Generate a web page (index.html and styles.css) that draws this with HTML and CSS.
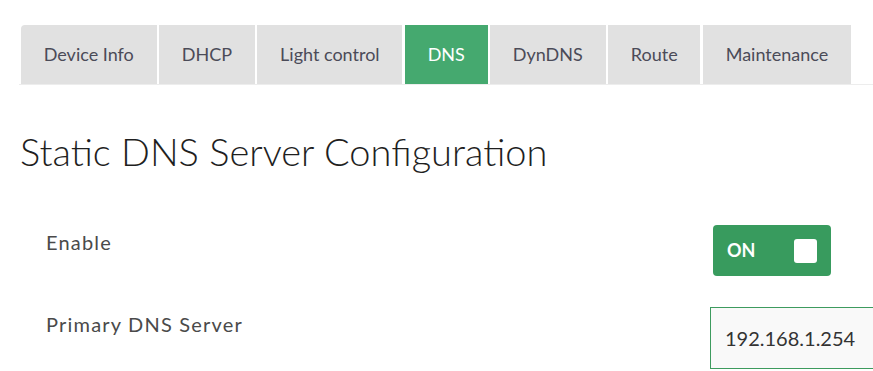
FILE: index.html
```html
<!DOCTYPE html>
<html lang="en">
<head>
    <meta charset="UTF-8">
    <meta name="viewport" content="width=device-width, initial-scale=1.0">
    <title>DNS Settings</title>
    <link rel="stylesheet" href="styles.css">
</head>
<body>
    <div class="page">
        <ul class="tabs">
            <li class="tab tab-first">Device Info</li>
            <li class="tab">DHCP</li>
            <li class="tab">Light control</li>
            <li class="tab active">DNS</li>
            <li class="tab">DynDNS</li>
            <li class="tab">Route</li>
            <li class="tab">Maintenance</li>
        </ul>

        <h1 class="title">Static DNS Server Configuration</h1>

        <div class="form">
            <div class="row">
                <div class="label">Enable</div>
                <div class="control">
                    <div class="toggle">
                        <span class="toggle-text">ON</span>
                        <span class="knob"></span>
                    </div>
                </div>
            </div>
            <div class="row">
                <div class="label">Primary DNS Server</div>
                <div class="control">
                    <input type="text" class="field" value="192.168.1.254">
                </div>
            </div>
        </div>
    </div>
</body>
</html>
```

FILE: styles.css
```css
body {
    margin: 0;
    background-color: #ffffff;
    font-family: 'Lato', 'Noto Sans', sans-serif;
    color: #4a4a4a;
    overflow: hidden;
}

.page {
    padding-left: 20px;
    padding-top: 25px;
}

/* tab bar */
.tabs {
    list-style: none;
    margin: 0 0 0 -1px;
    padding: 0 0 0 2px;
    display: flex;
    gap: 2.5px;
    border-bottom: 1px solid #ededed;
}

.tab {
    height: 59px;
    line-height: 59px;
    padding: 0 22.75px;
    background-color: #e1e1e1;
    color: #4b4b58;
    font-size: 18px;
    white-space: nowrap;
}

.tab-first {
    border-top-left-radius: 4px;
}

.tab.active {
    background-color: #45a96f;
    color: #ffffff;
}

.title {
    margin: 43px 0 0 0;
    font-size: 38px;
    line-height: 46px;
    font-weight: 300;
    color: #1f1f1f;
}

/* form rows */
.form {
    margin-top: 51px;
    display: flex;
    flex-direction: column;
    gap: 31px;
}

.row {
    display: grid;
    grid-template-columns: 690px 1fr;
    align-items: start;
}

.label {
    padding-left: 26px;
    padding-top: 5px;
    font-size: 20px;
    line-height: 24px;
    letter-spacing: 1.2px;
    color: #4a4a4a;
}

.toggle {
    margin-left: 3px;
    width: 118px;
    height: 51px;
    box-sizing: border-box;
    background-color: #389b5e;
    border-radius: 4px;
    display: flex;
    align-items: center;
    justify-content: space-between;
    padding: 0 14px;
}

.toggle-text {
    color: #ffffff;
    font-weight: 700;
    font-size: 18px;
    margin-top: -2px;
}

.knob {
    width: 23px;
    height: 24px;
    background-color: #ffffff;
    border-radius: 3px;
    margin-top: 1px;
}

.field {
    width: 200px;
    height: 62px;
    box-sizing: border-box;
    border: 1px solid #3d9b5e;
    background-color: #f9f9f9;
    padding: 0 14px;
    font-family: 'Lato', 'Noto Sans', sans-serif;
    font-size: 20px;
    color: #333333;
    outline: none;
}
```
